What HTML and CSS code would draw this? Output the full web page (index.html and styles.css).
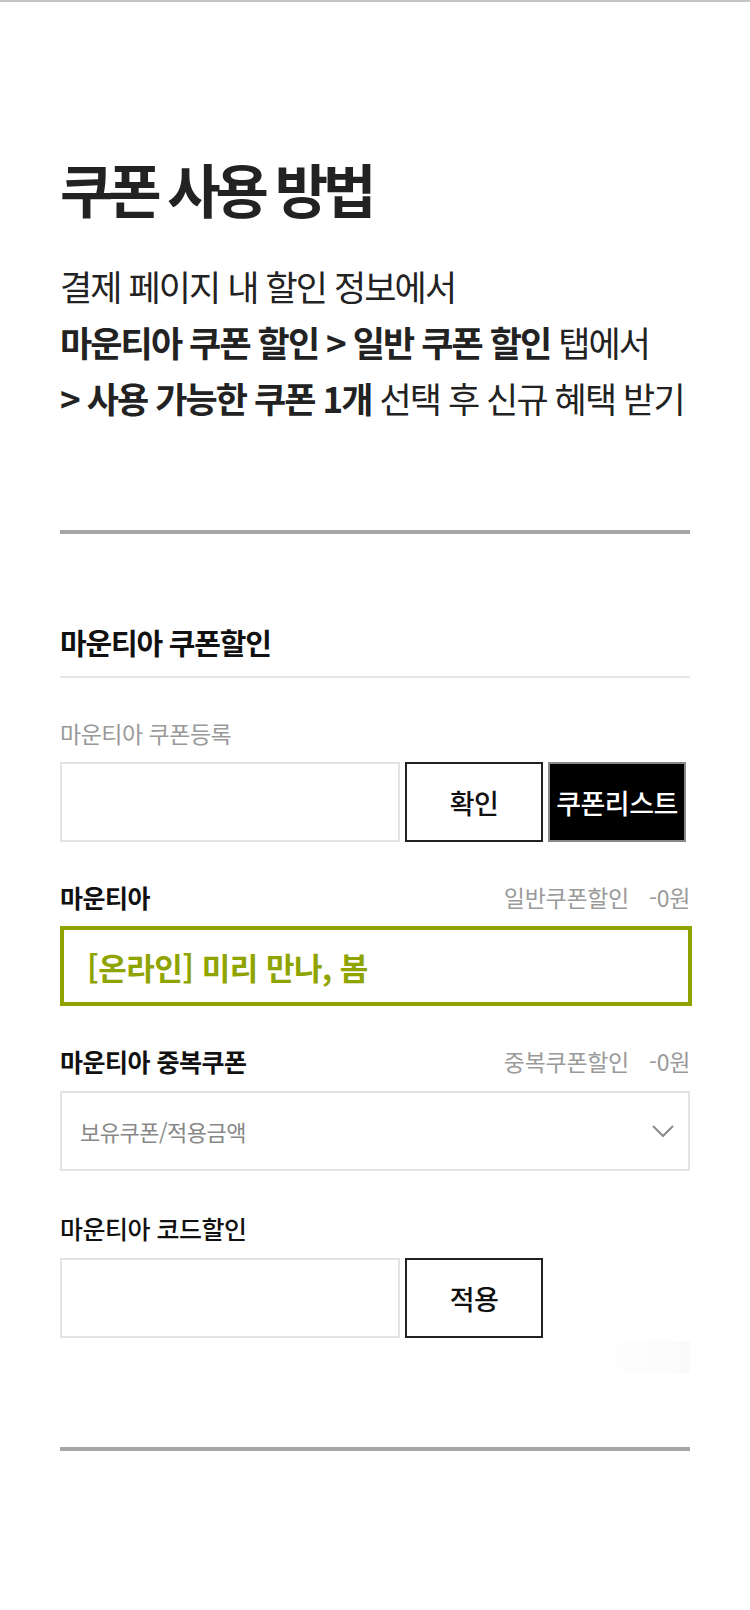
FILE: index.html
```html
<!DOCTYPE html>
<html lang="ko">
<head>
<meta charset="utf-8">
<title>쿠폰 사용 방법</title>
<link rel="stylesheet" href="styles.css">
</head>
<body>
<main class="page">
  <section class="guide">
    <h1 class="guide-title">쿠폰 사용 방법</h1>
    <p class="guide-text">
      <span class="line">결제 페이지 내 할인 정보에서</span>
      <span class="line"><b>마운티아 쿠폰 할인 &gt; 일반 쿠폰 할인</b> 탭에서</span>
      <span class="line"><b>&gt; 사용 가능한 쿠폰 1개</b> 선택 후 신규 혜택 받기</span>
    </p>
  </section>

  <hr class="divider">

  <section class="coupon">
    <h2 class="coupon-title">마운티아 쿠폰할인</h2>

    <div class="field">
      <div class="field-label muted">마운티아 쿠폰등록</div>
      <div class="input-row">
        <div class="text-input"></div>
        <button class="btn btn-outline">확인</button>
        <button class="btn btn-dark">쿠폰리스트</button>
      </div>
    </div>

    <div class="field">
      <div class="field-head">
        <span class="field-label strong">마운티아</span>
        <span class="field-sum"><span>일반쿠폰할인</span><span>-0원</span></span>
      </div>
      <div class="selected-coupon">[온라인] 미리 만나, 봄</div>
    </div>

    <div class="field">
      <div class="field-head">
        <span class="field-label strong">마운티아 중복쿠폰</span>
        <span class="field-sum"><span>중복쿠폰할인</span><span>-0원</span></span>
      </div>
      <div class="select-box">
        <span class="select-text">보유쿠폰/적용금액</span>
        <svg class="chevron" width="22" height="12" viewBox="0 0 22 12" aria-hidden="true">
          <path d="M1 1 L11 11 L21 1" fill="none" stroke="#8a8a8a" stroke-width="2"/>
        </svg>
      </div>
    </div>

    <div class="field field-last">
      <div class="field-label regular">마운티아 코드할인</div>
      <div class="input-row">
        <div class="text-input"></div>
        <button class="btn btn-outline">적용</button>
        <div class="fade"></div>
      </div>
    </div>
  </section>

  <hr class="divider divider-bottom">
</main>
</body>
</html>
```

FILE: styles.css
```css
* { box-sizing: border-box; }

html, body {
  margin: 0;
  padding: 0;
  background: #ffffff;
}

body {
  border-top: 2px solid #c4c4c4;
  font-family: "Noto Sans CJK KR", "Noto Sans", sans-serif;
  color: #222222;
}

.page {
  padding: 0 60px;
}

.guide-title {
  margin: 153px 0 0;
  font-size: 58px;
  line-height: 66px;
  font-weight: 700;
  letter-spacing: -5.2px;
  color: #222222;
}

.guide-text {
  margin: 37px 0 0;
  font-size: 35px;
  line-height: 56px;
  font-weight: 400;
  letter-spacing: -1.9px;
  color: #222222;
  white-space: nowrap;
}

.guide-text .line {
  display: block;
}

.guide-text b {
  font-weight: 700;
}

.divider {
  margin: 104px 0 0;
  height: 4px;
  border: 0;
  background: #a6a6a6;
}

.coupon-title {
  margin: 90px 0 0;
  padding-bottom: 16px;
  border-bottom: 2px solid #e6e6e6;
  font-size: 29px;
  line-height: 36px;
  font-weight: 700;
  letter-spacing: -1.2px;
  color: #111111;
}

.field {
  margin-top: 40px;
}

.field-last {
  margin-top: 42px;
}

.field-label {
  display: block;
  font-size: 23px;
  line-height: 30px;
  letter-spacing: -0.5px;
}

.field-label.muted {
  color: #999999;
}

.field-label.strong {
  font-size: 25px;
  font-weight: 700;
  color: #111111;
}

.field-label.regular {
  font-size: 25px;
  font-weight: 500;
  color: #111111;
}

.field-head {
  display: flex;
  justify-content: space-between;
  align-items: center;
}

.field-sum {
  display: flex;
  gap: 20px;
  font-size: 23px;
  line-height: 30px;
  color: #9a9a9a;
  letter-spacing: -0.3px;
}

.input-row {
  display: flex;
  gap: 5px;
  margin-top: 14px;
  height: 80px;
  position: relative;
}

.field-last .input-row {
  margin-top: 15px;
}

.text-input {
  width: 340px;
  height: 80px;
  border: 2px solid #e3e3e3;
  background: #ffffff;
}

.btn {
  width: 138px;
  height: 80px;
  padding: 0;
  font-family: inherit;
  font-size: 27px;
  font-weight: 500;
  letter-spacing: -0.5px;
}

.btn-outline {
  border: 2px solid #222222;
  background: #ffffff;
  color: #111111;
}

.btn-dark {
  border: 2px solid #8a8a8a;
  background: #000000;
  color: #ffffff;
}

.selected-coupon {
  margin-top: 14px;
  width: 632px;
  height: 80px;
  border: 4px solid #8fa400;
  padding-left: 23px;
  display: flex;
  align-items: center;
  font-size: 31px;
  font-weight: 700;
  letter-spacing: -0.5px;
  color: #8fa400;
}

.select-box {
  margin-top: 15px;
  height: 80px;
  border: 2px solid #e3e3e3;
  display: flex;
  align-items: center;
  justify-content: space-between;
  padding: 0 14px 0 18px;
}

.select-text {
  font-size: 22px;
  color: #888888;
  letter-spacing: -0.5px;
}

.fade {
  position: absolute;
  right: 0;
  top: 83px;
  width: 96px;
  height: 32px;
  background: linear-gradient(to right, rgba(250,250,250,0), #fafafa);
}

.divider-bottom {
  margin-top: 109px;
}
```
